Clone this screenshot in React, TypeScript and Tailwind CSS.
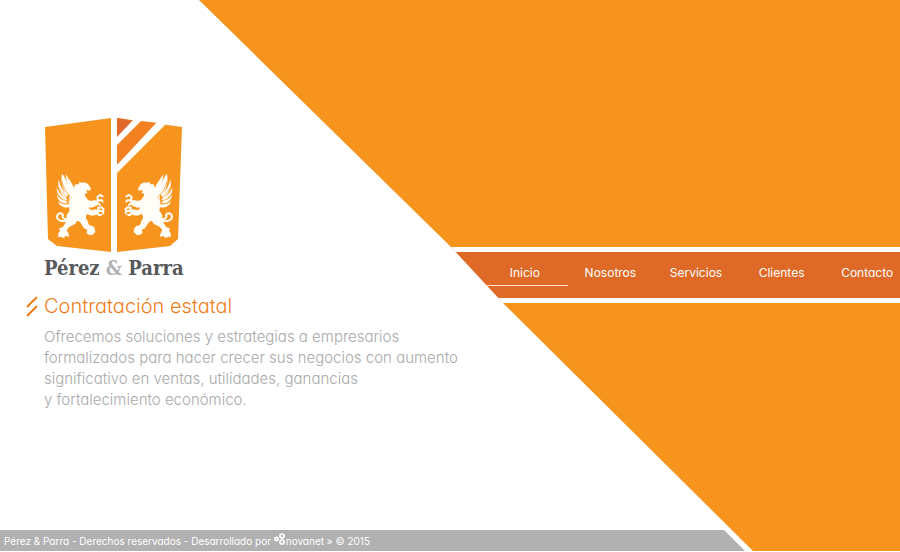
import React from "react";

const links = ["Inicio", "Nosotros", "Servicios", "Clientes", "Contacto"];

function Griffin() {
  return (
    <g fill="#fffdf8" stroke="none">
      <path d="M66 26C76 38 87 58 92 84L80 92C68 72 61 48 66 26Z" />
      <path d="M56 43C60 62 69 80 84 92L76 100C60 87 51 66 56 43Z" />
      <path d="M50 66C55 82 66 95 82 102L78 110C60 103 49 87 50 66Z" />
      <path d="M50 88C56 100 68 107 82 110L80 118C64 116 52 105 50 88Z" />
      <path d="M54 108C62 116 72 119 86 118L88 126C73 131 58 124 54 108Z" />
      <path d="M76 27C84 38 97 55 102 68L106 58L116 58L118 51L126 53C137 50 147 56 149 65L153 69L150 78L144 75L138 77L143 83L134 87C134 94 140 98 144 105L154 108L163 105L172 109L176 116L169 122L155 128L149 127L147 131L156 136L167 133L177 136L172 149L155 152L142 147C136 153 136 160 142 166L147 180L158 183L164 189L166 201L157 210L146 209L139 203L142 194L132 190L120 171L112 167L105 177L89 185L80 194L85 205L88 215L76 213L72 219L61 215L54 216L55 204L60 199L57 190L67 187L73 179L80 164L80 150L89 137L85 116L88 91C87 68 79 45 76 27Z" />
      <g fill="none" stroke="#fffdf8" strokeWidth="6" strokeLinecap="round" strokeLinejoin="round">
        <path d="M165 111L174 107L172 96L180 90L188 94M174 107L184 105L188 110M171 113L180 120" />
        <path d="M168 139L176 134L174 128L184 127L191 133M176 138L189 138L190 145M173 143L177 151L184 149" />
        <path d="M84 161C72 164 65 158 69 150C64 141 52 145 51 154C50 163 61 170 72 168L84 165" />
      </g>
      <g fill="none" stroke="#f7941e" strokeWidth="2" strokeLinecap="round">
        <path d="M66 49C71 69 79 84 94 98M57 69C65 85 76 94 91 103M54 90C62 101 73 107 87 109M57 110C67 116 76 117 87 114" />
      </g>
    </g>
  );
}

function Shield() {
  return (
    <svg className="block h-[135px] w-[138px]" viewBox="44 117 138 135" role="img" aria-label="Escudo con dos grifos">
      <path fill="#f7941e" d="M45 127L111 118V252L57 246L48 239Z" />
      <path fill="#f7941e" d="M117 118L182 127L178 239L170 246L117 252Z" />
      <path fill="#e2672a" d="M117 118L135 121L117 138Z" />
      <path fill="#f38122" d="M141 121L159 123L117 165V145Z" />
      <path fill="#fff" d="M134 119L142 120L117 145V137ZM158 121L167 123L117 173V165Z" />
      <g transform="translate(40 165) scale(.3333)"><Griffin /></g>
      <g transform="translate(189 165) scale(-.3333 .3333)"><Griffin /></g>
    </svg>
  );
}

export default function App() {
  return (
    <div className="relative isolate flex min-h-screen flex-col bg-white font-[Inter,sans-serif] [font-feature-settings:'cv11']">
      <div
        aria-hidden="true"
        className="absolute inset-x-0 top-0 bottom-px -z-10 bg-[#f7941e] [clip-path:polygon(199px_0,100%_0,100%_100%,753px_100%,503px_303px,530px_303px,530px_247px,451px_247px)]"
      />
      <div className="grid flex-1 grid-cols-[450px_1fr]">
        <main className="pt-[117px] pl-11">
          <header className="w-fit">
            <Shield />
            <p className="mt-1 font-['DejaVu_Serif_Condensed','DejaVu_Serif',serif] text-xl leading-6 font-bold whitespace-nowrap text-[#58595b]">
              Pérez <span className="text-[#b0b1b3]">&amp;</span> Parra
            </p>
          </header>
          <h1 className="mt-3 -ml-5 flex items-center gap-1 text-xl leading-7 font-light text-[#f07f1f]">
            <svg className="h-6 w-4" viewBox="0 0 16 24" fill="none" stroke="#ee7d1a" strokeWidth="2" aria-hidden="true">
              <path d="M3 13L13 3M3 22L13 12" />
            </svg>
            Contratación estatal
          </h1>
          <p className="mt-1.5 text-[15px] leading-[21px] font-light whitespace-nowrap text-[#a9a9a9]">
            Ofrecemos soluciones y estrategias a empresarios<br />
            formalizados para hacer crecer sus negocios con aumento<br />
            significativo en ventas, utilidades, ganancias<br />
            y fortalecimiento económico.
          </p>
        </main>
        <nav className="mt-[247px] h-14 overflow-hidden border-y-[5px] border-white bg-[#df6926] pl-8 [clip-path:polygon(1px_0,100%_0,100%_100%,53px_100%)]">
          <ul className="-mr-2.5 grid grid-cols-5 text-center text-xs leading-5 text-white">
            {links.map((label, i) => (
              <li key={label} className="pt-[11px]">
                <a href={"#" + label.toLowerCase()} className={i === 0 ? "block border-b border-[#ffe1c8] pb-[2px]" : "block"}>
                  {label}
                </a>
              </li>
            ))}
          </ul>
        </nav>
      </div>
      <footer className="mb-px flex h-[21px] w-[745px] items-center bg-[#b1b1b1] pl-1 text-[10px] leading-4 text-white [clip-path:polygon(0_0,724px_0,100%_100%,0_100%)]">
        <p className="flex items-center whitespace-pre">
          <span>Pérez &amp; Parra - Derechos reservados - Desarrollado por </span>
          <svg className="mb-1 h-3 w-3" viewBox="0 0 12 12" fill="none" stroke="white" strokeWidth="1.7" aria-hidden="true">
            <circle cx="2.5" cy="6" r="1.6" />
            <circle cx="8" cy="3" r="2" />
            <circle cx="8" cy="9" r="2" />
          </svg>
          <span>novanet » © 2015</span>
        </p>
      </footer>
    </div>
  );
}
